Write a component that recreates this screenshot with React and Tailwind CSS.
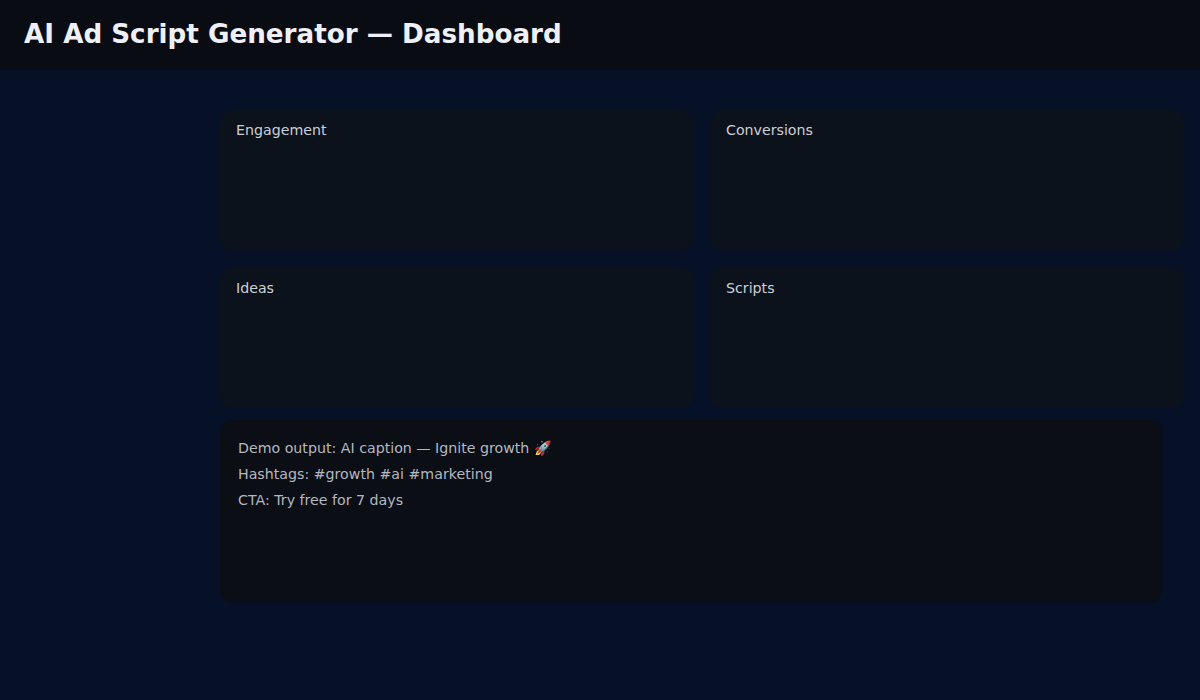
const stats = ['Engagement', 'Conversions', 'Ideas', 'Scripts'];

export default function App() {
  return (
    <div className="min-h-[700px] bg-[#061027] font-['DejaVu_Sans',sans-serif]">
      <header className="flex h-[70px] items-center bg-[#090c13] px-6">
        <h1 className="text-[26.2px] font-bold text-[#eef0f6]">AI Ad Script Generator — Dashboard</h1>
      </header>

      <div className="flex pt-10">
        <aside className="w-[220px] shrink-0" />
        <main className="flex-1 pr-4">
          <div className="grid grid-cols-2 gap-x-4 gap-y-[18px]">
            {stats.map((label) => (
              <div key={label} className="h-[140px] rounded-xl bg-[#0c121b] px-4 pt-[10px]">
                <p className="text-[14.2px] leading-[20px] text-[#cbd0d8]">{label}</p>
              </div>
            ))}
          </div>

          <div className="mt-3 h-[182px] w-[942px] rounded-xl bg-[#0b0e15] px-[18px] py-[15px] text-[14.2px] leading-[26px] text-[#b3b8c1]">
            <p>Demo output: AI caption — Ignite growth 🚀</p>
            <p>Hashtags: #growth #ai #marketing</p>
            <p>CTA: Try free for 7 days</p>
          </div>
        </main>
      </div>
    </div>
  );
}
